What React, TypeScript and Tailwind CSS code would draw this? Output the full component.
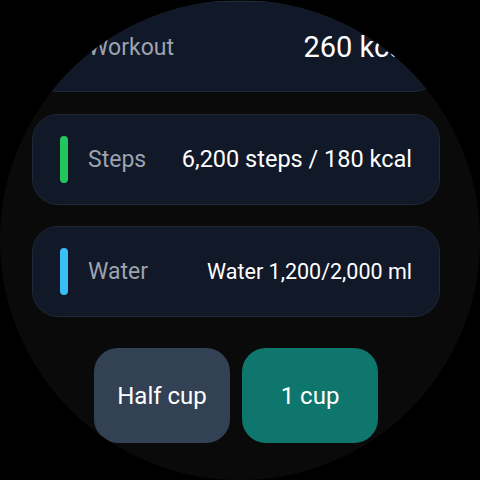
import React from "react";

function Row({
  label,
  value,
  bar,
  valueClass,
  className,
}: {
  label: string;
  value: string;
  bar: string;
  valueClass: string;
  className?: string;
}) {
  return (
    <div
      className={`flex h-[91px] w-full shrink-0 items-center rounded-[26px] border border-[#1f2937] bg-[#111827] pl-[27px] pr-[27px] ${className ?? ""}`}
    >
      <div className={`h-[47px] w-[8px] shrink-0 rounded-full ${bar}`} />
      <span className="ml-[20px] text-[23px] leading-none text-[#9ca3af]">{label}</span>
      <span className={`ml-auto whitespace-nowrap leading-none text-white ${valueClass}`}>{value}</span>
    </div>
  );
}

export default function App() {
  return (
    <div
      className="h-[480px] w-[480px] bg-black"
      style={{ fontFamily: "Roboto, 'Noto Sans', sans-serif" }}
    >
      <div className="flex h-full w-full flex-col overflow-hidden rounded-full bg-[#0a0a0a] pl-[32px] pr-[40px] pt-[1px]">
        <Row label="Workout" value="260 kcal" bar="bg-orange-500" valueClass="text-[29px]" className="pt-[2px]" />
        <Row
          label="Steps"
          value="6,200 steps / 180 kcal"
          bar="bg-[#22c55e]"
          valueClass="text-[23.5px]"
          className="mt-[22px]"
        />
        <Row
          label="Water"
          value="Water 1,200/2,000 ml"
          bar="bg-[#38bdf8]"
          valueClass="text-[21.5px]"
          className="mt-[21px]"
        />
        <div className="mt-[31px] flex justify-center gap-[12px]">
          <button className="flex h-[95px] w-[136px] items-center justify-center rounded-[24px] bg-[#334155] text-[24px] text-white">
            Half cup
          </button>
          <button className="flex h-[95px] w-[136px] items-center justify-center rounded-[24px] bg-[#0f766e] text-[24px] text-white">
            1 cup
          </button>
        </div>
      </div>
    </div>
  );
}
